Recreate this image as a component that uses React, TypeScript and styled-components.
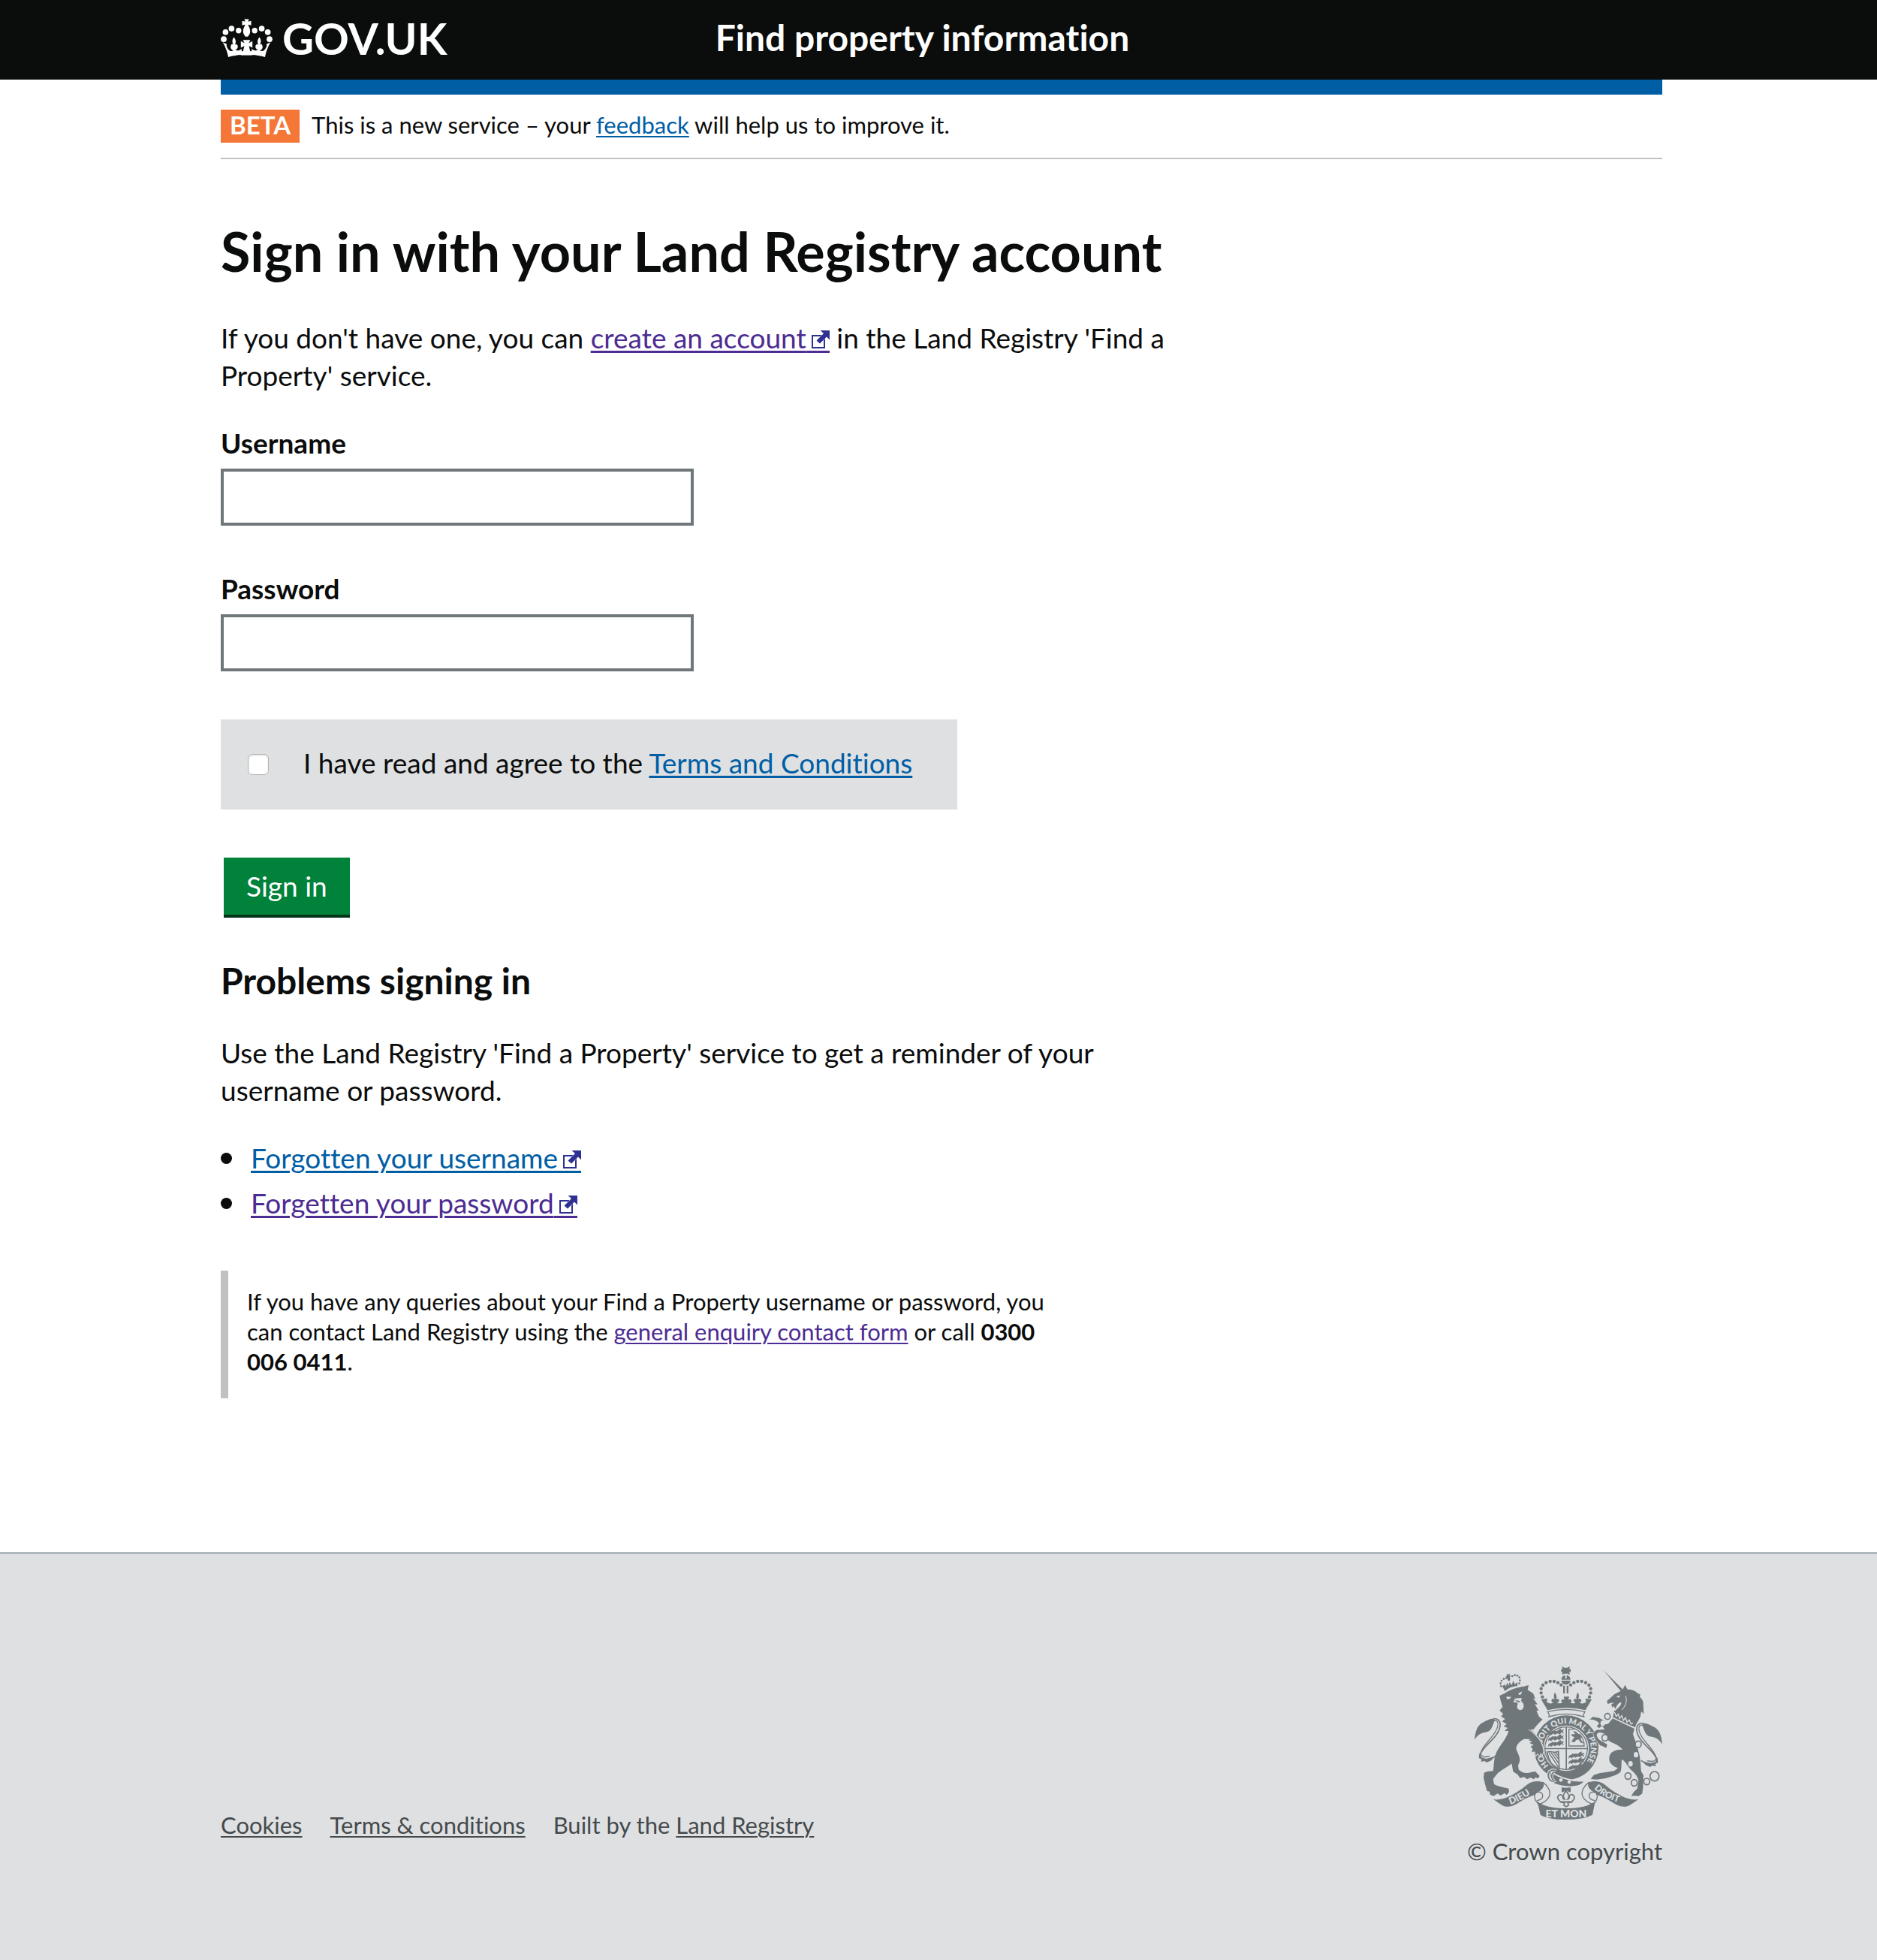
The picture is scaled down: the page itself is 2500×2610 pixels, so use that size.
import React, { useId } from "react";
import styled, { createGlobalStyle } from "styled-components";

const color = {
  black: "#0b0c0c",
  white: "#ffffff",
  blue: "#005ea5",
  visited: "#4c2c92",
  icon: "#2e3191",
  orange: "#f47738",
  green: "#00823b",
  greenShadow: "#003618",
  grey: "#6f777b",
  border: "#bfc1c3",
  panel: "#dee0e2",
  footerBorder: "#a1acb2",
  footerText: "#454a4c",
};

const GlobalStyle = createGlobalStyle`
  *, *::before, *::after { box-sizing: border-box; }
  body {
    margin: 0;
    background: ${color.white};
    color: ${color.black};
    font-family: Lato, "Liberation Sans", sans-serif;
    font-size: 37px;
    font-variant-ligatures: none;
    line-height: 50px;
  }
  h1, h2, p, ul { margin: 0; padding: 0; }
`;

const Container = styled.div`
  max-width: 1928px;
  margin: 0 auto;
  padding-left: 8px;
`;

const Header = styled.header`
  background: ${color.black};
  color: ${color.white};
`;

const HeaderRow = styled.div`
  display: grid;
  grid-template-columns: 1fr 2fr;
  column-gap: 28px;
  align-items: center;
  height: 106px;
  padding-bottom: 4px;
`;

const LogoLink = styled.a`
  display: flex;
  align-items: center;
  gap: 13px;
  color: inherit;
  text-decoration: none;
  font-size: 58px;
  font-weight: 700;
  line-height: 60px;
`;

const ServiceName = styled.a`
  color: inherit;
  text-decoration: none;
  font-size: 48px;
  font-weight: 700;
  line-height: 60px;
  padding-bottom: 2px;
`;

const BlueBar = styled.div`
  height: 20px;
  background: ${color.blue};
`;

const PhaseBanner = styled.div`
  display: flex;
  align-items: flex-start;
  gap: 16px;
  padding: 20px 0;
  border-bottom: 2px solid ${color.border};
  font-size: 31px;
  line-height: 40px;
`;

const PhaseTag = styled.strong`
  padding: 0 12px 4px;
  background: ${color.orange};
  color: ${color.white};
  font-size: 33px;
`;

const Link = styled.a<{ $visited?: boolean; $small?: boolean }>`
  color: ${(p) => (p.$visited ? color.visited : color.blue)};
  text-decoration-line: underline;
  text-decoration-thickness: ${(p) => (p.$small ? 2 : 3)}px;
  text-underline-offset: 3px;
`;

const Main = styled.main`
  max-width: 1260px;
  padding: 82px 0 205px;
`;

const Title = styled.h1`
  font-size: 72px;
  line-height: 80px;
`;

const Subtitle = styled.h2`
  margin-top: 58px;
  font-size: 48px;
  line-height: 60px;
`;

const Paragraph = styled.p<{ $gap: number }>`
  margin-top: ${(p) => p.$gap}px;
`;

const Form = styled.form`
  margin-top: 40px;
`;

const Fields = styled.div`
  display: grid;
  row-gap: 59px;
`;

const Field = styled.div`
  display: flex;
  flex-direction: column;
  gap: 9px;
`;

const Label = styled.label`
  font-weight: 700;
`;

const TextInput = styled.input`
  width: 50%;
  height: 76px;
  padding: 8px;
  border: 4px solid ${color.grey};
  border-radius: 0;
  background: ${color.white};
  font: inherit;
`;

const CheckPanel = styled.div`
  display: flex;
  align-items: center;
  gap: 46px;
  width: fit-content;
  margin-top: 64px;
  padding: 35px 60px 35px 36px;
  background: ${color.panel};
`;

const Checkbox = styled.input`
  appearance: none;
  flex: none;
  width: 28px;
  height: 28px;
  margin: 0;
  border: 1px solid #b4b5b7;
  border-radius: 6px;
  background: ${color.white};
  box-shadow: inset 0 1px 2px #d8d8d8;
  &:checked { background: ${color.blue}; }
`;

const CheckLabel = styled.label`
  margin: -2px 0 2px;
`;

const SubmitButton = styled.button`
  display: block;
  height: 76px;
  margin: 64px 0 0 4px;
  padding: 0 30px;
  border: 0;
  background: ${color.green};
  box-shadow: 0 4px 0 ${color.greenShadow};
  color: ${color.white};
  font: inherit;
`;

const LinkList = styled.ul`
  display: grid;
  row-gap: 10px;
  margin-top: 40px;
  list-style: none;
`;

const LinkItem = styled.li`
  display: flex;
  align-items: center;
  gap: 25px;
  &::before {
    content: "";
    width: 15px;
    height: 15px;
    border-radius: 50%;
    background: ${color.black};
  }
`;

const Inset = styled.p`
  margin-top: 65px;
  padding: 21px 140px 29px 25px;
  border-left: 10px solid ${color.border};
  font-size: 31px;
  line-height: 40px;
`;

const Footer = styled.footer`
  border-top: 2px solid ${color.footerBorder};
  background: ${color.panel};
  color: ${color.footerText};
  font-size: 31px;
  line-height: 40px;
`;

const FooterRow = styled.div`
  display: flex;
  justify-content: space-between;
  align-items: flex-end;
  padding: 150px 0 126px;
`;

const FooterLinks = styled.ul`
  display: flex;
  gap: 37px;
  padding-bottom: 35px;
  list-style: none;
`;

const FooterLink = styled(Link)`
  color: inherit;
`;

const Copyright = styled.a`
  display: flex;
  flex-direction: column;
  align-items: flex-end;
  gap: 22px;
  color: inherit;
  text-decoration: none;
`;

const ExternalSvg = styled.svg`
  width: 31px;
  height: 30px;
  padding: 0 0 3px 7px;
  border-bottom: 3px solid currentColor;
  vertical-align: -6px;
  overflow: visible;
`;

function ExternalIcon() {
  return (
    <ExternalSvg viewBox="0 0 24 24" aria-hidden="true">
      <path d="M17 9V7H1v16h16V9" fill="none" stroke={color.icon} strokeWidth="2" />
      <path
        d="M11.500 0H24v12.500l-4-4-9 9L6.500 13.500l9.500-9.500z"
        fill={color.icon}
        stroke={color.white}
        strokeWidth="1"
        paintOrder="stroke"
      />
    </ExternalSvg>
  );
}

/** Crown from the header logo; one side is drawn and mirrored. */
function Crown() {
  const id = useId();
  return (
    <svg width="69" height="52" viewBox="26 29 206 155" fill={color.white} aria-hidden="true">
      <g id={id}>
        <circle cx="38" cy="110" r="11.500" />
        <circle cx="45" cy="82" r="11.500" />
        <circle cx="69" cy="68" r="11.500" />
        <circle cx="97" cy="76" r="11" />
        <path d="M34 122l16 8-1 6c6 18 16 24 28 20-10-4-14-14-10-22 3-6 6-5 9-2-6-12-4-22 2-30 8 8 10 18 5 30 4-3 8-2 10 3 3 9-2 15-9 18 8 4 16 3 25-5v24c-17 0-34 4-53 9C52 160 45 141 34 122z" />
      </g>
      <use href={`#${id}`} transform="translate(258 0) scale(-1 1)" />
      <path d="M106 158h46v16h-46z" />
      <path d="M120 30h18l-3 10 12-3v18l-12-3c2 8 8 14 8 28 0 10-6 16-9 20h-10c-3-4-9-10-9-20 0-14 6-20 8-28l-12 3V37l12 3z" />
      <path d="M114 113h30l-7 13 15-8v26l-14-7 6 24h-30l6-24-14 7v-26l15 8z" />
    </svg>
  );
}

const lineProps = { fill: "none", stroke: color.grey, strokeLinecap: "round" as const };

const crownBeads = [
  [373, 182], [368, 166], [368, 149], [375, 135], [388, 125],
  [404, 120], [420, 120], [435, 125], [448, 134],
];
const lionCrownBeads = [
  [208, 139], [206, 128], [210, 117], [219, 110], [281, 128], [283, 116],
  [281, 104], [273, 97], [263, 95], [253, 99], [229, 107],
];
const shieldLions = [[0, 0], [0, 23], [0, 46], [82, 92], [82, 115], [82, 138]];
const chainGaps = [[747, 413], [725, 449], [614, 287]];
const chainLinks = [
  [633, 260, 11], [623, 345, 12], [756, 371, 12], [715, 498, 12],
  [740, 525, 12], [790, 520, 12], [821, 499, 18],
];

function Crest() {
  const id = useId();
  return (
    <svg width="250" height="204" viewBox="102 60 750 612" fill={color.grey} role="img" aria-label="Royal coat of arms">
      <defs>
        <path id={`${id}-garter`} d="M399 456A98 98 0 1 1 531 462" />
        <path id={`${id}-left`} d="M245 612Q296 594 346 556" />
        <path id={`${id}-right`} d="M579 549Q628 594 706 612" />
      </defs>

      {/* central crown */}
      <path d="M451 60l10 5h12l10-5-3 12 6-2v13l-6-2 3 12-10-4h-12l-10 4 3-12-6 2V70l6 2z" />
      <path d="M449 113a18 18 0 0 1 15-18v14h6V95a18 18 0 0 1 15 18z" />
      <path d="M448 117h38c-4 12-12 16-19 16s-15-4-19-16z" />
      <path d="M456 137h7v31h-7zM470 137h7v31h-7z" />
      {crownBeads.map(([x, y]) => (
        <React.Fragment key={`${x}-${y}`}>
          <circle cx={x} cy={y} r="6.500" />
          <circle cx={934 - x} cy={y} r="6.500" />
        </React.Fragment>
      ))}
      <path d="M368 192l25-4-3 14c8 8 20 8 28 2-8 0-11-7-7-12 4-4 8-3 11 0-5-12-3-20 1-28 6 9 9 18 5 28 4-4 9-3 11 1 3 6-1 10-7 11 6 6 14 5 21-1l-6-4 6-8 8 2-3-12h22l-3 12 8-2 6 8-6 4c7 6 15 7 21 1-6-1-10-5-7-11 2-4 7-5 11-1-4-10-1-19 5-28 4 8 6 16 1 28 3-3 7-4 11 0 4 5 1 12-7 12 8 6 20 6 28-2l-3-14 25 4-25 43q-75-18-151 0z" />

      {/* garter and shield */}
      <circle cx="468" cy="385" r="129" />
      <path d="M394 241q73-18 149 0-8 12-4 20-70-22-140 0 4-9-5-20z" fill={color.panel} stroke={color.grey} strokeWidth="4" />
      <circle cx="468" cy="387" r="91" fill={color.panel} />
      <circle cx="468" cy="387" r="85" fill="none" stroke={color.grey} strokeWidth="4" />
      <path d="M466 303h5v170h-5zM383 386h170v5H383z" />
      {shieldLions.map(([dx, dy]) => (
        <path
          key={dy}
          transform={`translate(${dx} ${dy})`}
          d="M397 327c5-9 13-3 14-12 7 7 15-3 20 4l9-8 9-3-2 7 13-2-6 7 5 9-11-5-5 8-9-4-13 5-4-5-11 8-3-6-9 6z"
        />
      ))}
      <path d="M479 311h20M479 311v67h61c0-15-7-35-18-47" {...lineProps} strokeWidth="4" />
      <path d="M487 360c8-4 9-13 15-18-8 2-9-8-15-7 6-9 14-1 17-6l-8-10c9-2 15 3 18 9l10 5 8 13-8-1 6 13 8 10-13-4-7-12-11 3-6 9-4-2z" />
      <path d="M391 402c5 24 18 55 43 70 8 2 7-4 6-12l-3-60c-13 8-28-3-46 2z" {...lineProps} strokeWidth="5" />
      <path d="M400 407l36 54M409 406l27 38M419 407l18 22M428 407l9 9" {...lineProps} strokeWidth="4" />
      <text fill={color.panel} fontSize="32" fontWeight="900">
        <textPath href={`#${id}-garter`}>HONI SOIT QUI MAL Y PENSE</textPath>
      </text>

      {/* buckle and hanging end of the garter */}
      <path d="M400 477q67 46 142 40-12 26-67 24-45-3-78-24z" stroke={color.panel} strokeWidth="5" />
      <path d="M427 478c-16-10-34 4-30 22 3 16 16 24 29 15M418 482c-9 8-10 20-4 30" fill="none" stroke={color.panel} strokeWidth="12" />
      <path d="M427 478c-16-10-34 4-30 22 3 16 16 24 29 15M418 482c-9 8-10 20-4 30" {...lineProps} strokeWidth="5" />
      <circle cx="447" cy="514" r="7" fill={color.panel} />
      <circle cx="480" cy="522" r="7" fill={color.panel} />

      {/* lion */}
      {lionCrownBeads.map(([x, y]) => (
        <circle key={`${x}-${y}`} cx={x} cy={y} r="4" />
      ))}
      <path d="M230 90l6 3 5-5 1 8 6 1-5 5 1 14-9 2-3-14-6-3 5-3z" />
      <path d="M213 139l10-7 4 9 5-16 8 12 1-15 10 13 5-18 7 14 11-9-1 16q-29 2-50 21z" />
      <path
        d="M202 177L222 168C245 150 280 142 299 140L318 135 314 154 336 168 345 190 336 187 354 212 343 211 358 237 349 237 360 262 374 272C360 284 345 300 338 312L325 312C350 335 375 365 377 400L372 414 365 406 362 418 354 408 347 416 343 400 331 403 334 390 326 380 338 374 322 366 332 360 316 354 328 350 300 350C285 358 270 370 268 388C272 405 285 420 282 440L276 455 278 472C290 486 310 490 330 482L345 480 362 498 355 508 346 503 338 511 326 504 312 511 300 502 284 506 274 492 256 480 250 448C235 462 205 475 190 492L176 510 180 530C195 540 215 542 238 548L240 562 230 574 222 566 206 576 194 568 178 578 164 572 162 560 152 558 145 535 138 505 140 485 152 480 176 478C182 450 175 420 200 385C215 362 230 345 238 318L222 318 234 306 218 300 230 290 212 280 224 270 208 260 216 250 202 236 214 222 207 200z"
        stroke={color.panel}
        strokeWidth="6"
        paintOrder="stroke"
      />
      <path d="M229 181l20 1-7 8-11 1zM277 168l15-8-4 12-9 2zM264 188l26-2-2 12 9 11c4 12-1 25-13 26-13-3-15-15-9-25l-5-7-14 1z" fill={color.panel} />
      <path d="M262 195l22 3-5 7z" />
      <path d="M318 312c34 26 51 46 57 66" fill="none" stroke={color.panel} strokeWidth="3" />
      <g id={`${id}-tail`}>
        <path d="M102 353c3-27 7-56 33-69 24-10 31-19 48-10-12 32-14 42-31 48-22 4-35 8-50 31z" />
        <path d="M169 273c20-10 38 2 35 25-7 52-77 83-80 118-1 19 29 27 61 3" {...lineProps} strokeWidth="5" />
        <path d="M178 278c13-6 19 4 17 19-7 43-62 72-68 110-1 13 14 18 34 12" {...lineProps} strokeWidth="4" />
        <path d="M121 406l-2 20 12 5-4 10 15-3 8 6 19-8 11-15-32 8-18-5z" />
      </g>
      <use href={`#${id}-tail`} transform="translate(954 18) scale(-1 1)" />

      {/* unicorn */}
      <path d="M617 75L694 152 703 134 713 152C735 152 748 160 754 168L764 172 762 182C772 190 777 200 776 212L778 250 768 240 764 262 757 276 752 284 660 240 665 236C676 226 690 215 688 203L680 206C672 212 668 222 664 230L659 218 654 226 648 213 660 204 640 208 634 211 631 198 645 186 660 172 686 158z" />
      <path d="M706 178c6 24 0 40-16 56" fill="none" stroke={color.panel} strokeWidth="3" />
      <path d="M667 180l18-4-7 9z" fill={color.panel} />
      <path d="M660 236l92 46-9 22-88-41z" />
      <path d="M661 243l7 17 8-9 5 17 9-11 7 19 8-11 6 18 9-9 7 16 8-4" fill="none" stroke={color.panel} strokeWidth="4" />
      <path
        d="M654 268L741 309 735 330C740 350 752 370 757 400C765 425 765 455 768 480L777 495 775 545 772 568 758 578 740 577 728 578 738 562 752 548 757 515C750 490 735 482 722 468C712 455 702 436 690 432C688 450 690 470 685 482C670 495 640 503 622 508L590 512 566 510 578 494 600 487 660 478 675 466C655 460 638 445 640 425C642 400 665 392 694 392C680 378 665 370 655 366C640 360 625 350 634 338C625 330 610 322 600 324L590 330C590 345 600 355 612 360L632 372 628 386 612 378 604 376C590 360 578 345 576 325L590 314 622 312 612 298 600 306 590 300 600 288C592 276 580 272 562 272L575 262 600 266 622 278 618 292 635 290z"
        stroke={color.panel}
        strokeWidth="4"
        paintOrder="stroke"
      />
      {chainGaps.map(([x, y]) => (
        <ellipse key={x} cx={x} cy={y} rx="9" ry="11" fill={color.panel} />
      ))}
      {chainLinks.map(([x, y, r]) => (
        <ellipse key={x} cx={x} cy={y} rx={r} ry={r + 1} fill={color.panel} stroke={color.grey} strokeWidth="5" />
      ))}

      {/* fleur-de-lis pendant */}
      <path d="M450 543q17 4 36 0v20q-9-2-18-9-9 7-18 9z" />
      <path d="M467 557c14 15 15 24 7 34 9-1 6-9 7-15 13-11 24 5 18 14l-9 12-16 3 4 9-10 7-10-7 4-9-16-3-10-12c-6-10 6-24 18-13 1 6-2 13 8 14-8-11-7-20 5-34zM446 601h43" {...lineProps} strokeWidth="5" />

      {/* motto scroll */}
      <g id={`${id}-scroll`}>
        <path d="M177 591c45 9 104-32 137-60 22-17 63-15 70 1-17 24-34 42-63 49-36 15-61 44-95 39-17-4-30-17-49-29z" />
        <path d="M376 524C396 538 408 560 400 580C392 598 376 606 358 612L346 596C338 580 342 566 354 560C368 554 380 545 376 524z" fill={color.panel} stroke={color.grey} strokeWidth="4" />
        <path d="M346 566C362 556 376 566 374 580C372 590 362 594 352 596" {...lineProps} strokeWidth="4" />
      </g>
      <use href={`#${id}-scroll`} transform="translate(934 0) scale(-1 1)" />
      <path d="M353 599q33 28 114 28t117-28l-11 54q-35 19-106 19t-102-19z" />
      <g fill={color.panel} fontWeight="900">
        <text fontSize="38"><textPath href={`#${id}-left`}>DIEU</textPath></text>
        <text fontSize="36"><textPath href={`#${id}-right`}>DROIT</textPath></text>
        <text x="468" y="662" fontSize="42" textAnchor="middle">ET MON</text>
      </g>
    </svg>
  );
}

export default function App() {
  return (
    <>
      <GlobalStyle />
      <Header>
        <Container>
          <HeaderRow>
            <LogoLink href="#"><Crown />GOV.UK</LogoLink>
            <ServiceName href="#">Find property information</ServiceName>
          </HeaderRow>
        </Container>
      </Header>
      <Container>
        <BlueBar />
        <PhaseBanner>
          <PhaseTag>BETA</PhaseTag>
          <span>
            This is a new service – your <Link $small href="#">feedback</Link> will help us to improve it.
          </span>
        </PhaseBanner>
        <Main>
          <Title>Sign in with your Land Registry account</Title>
          <Paragraph $gap={51}>
            If you don't have one, you can{" "}
            <Link $visited href="#">create an account<ExternalIcon /></Link>{" "}
            in the Land Registry 'Find a Property' service.
          </Paragraph>
          <Form onSubmit={(e) => e.preventDefault()}>
            <Fields>
              <Field>
                <Label htmlFor="username">Username</Label>
                <TextInput id="username" type="text" autoComplete="username" />
              </Field>
              <Field>
                <Label htmlFor="password">Password</Label>
                <TextInput id="password" type="password" autoComplete="current-password" />
              </Field>
            </Fields>
            <CheckPanel>
              <Checkbox id="terms" type="checkbox" />
              <CheckLabel htmlFor="terms">
                I have read and agree to the <Link href="#">Terms and Conditions</Link>
              </CheckLabel>
            </CheckPanel>
            <SubmitButton type="submit">Sign in</SubmitButton>
          </Form>
          <Subtitle>Problems signing in</Subtitle>
          <Paragraph $gap={41}>
            Use the Land Registry 'Find a Property' service to get a reminder of your username or password.
          </Paragraph>
          <LinkList>
            <LinkItem>
              <Link href="#">Forgotten your username<ExternalIcon /></Link>
            </LinkItem>
            <LinkItem>
              <Link $visited href="#">Forgetten your password<ExternalIcon /></Link>
            </LinkItem>
          </LinkList>
          <Inset>
            If you have any queries about your Find a Property username or password, you can contact Land
            Registry using the <Link $visited $small href="#">general enquiry contact form</Link> or call{" "}
            <strong>0300 006 0411</strong>.
          </Inset>
        </Main>
      </Container>
      <Footer>
        <Container>
          <FooterRow>
            <FooterLinks>
              <li><FooterLink $small href="#">Cookies</FooterLink></li>
              <li><FooterLink $small href="#">Terms &amp; conditions</FooterLink></li>
              <li>Built by the <FooterLink $small href="#">Land Registry</FooterLink></li>
            </FooterLinks>
            <Copyright href="#">
              <Crest />
              © Crown copyright
            </Copyright>
          </FooterRow>
        </Container>
      </Footer>
    </>
  );
}
